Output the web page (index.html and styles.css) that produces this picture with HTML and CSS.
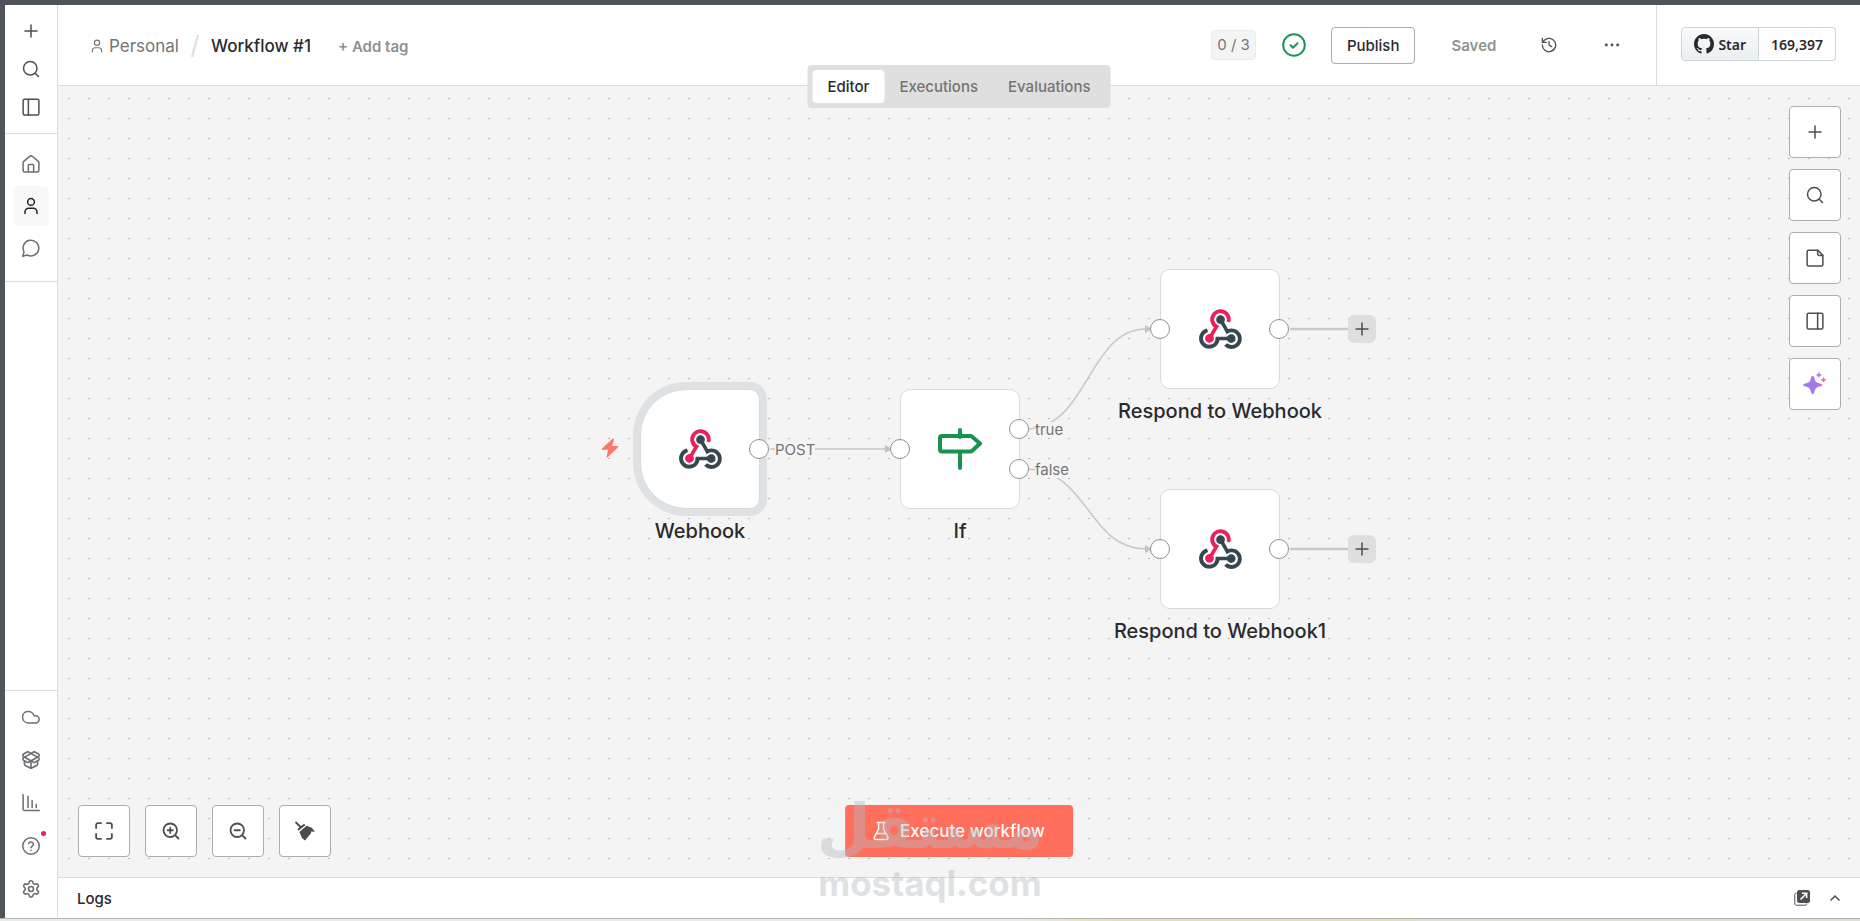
FILE: index.html
```html
<!DOCTYPE html>
<html lang="en">
<head>
<meta charset="utf-8">
<title>Workflow #1</title>
<link rel="stylesheet" href="styles.css">
</head>
<body>
<svg class="defs" aria-hidden="true">
  <symbol id="plus" viewBox="0 0 24 24"><path d="M4 12h16M12 4v16"/></symbol>
  <symbol id="search" viewBox="0 0 24 24"><circle cx="11" cy="11" r="9"/><path d="m22 22-4.3-4.3"/></symbol>
  <symbol id="user" viewBox="0 0 24 24"><path d="M20 22v-2a5 5 0 0 0-5-5H9a5 5 0 0 0-5 5v2"/><circle cx="12" cy="6.500" r="4.500"/></symbol>
  <symbol id="webhook" viewBox="0 0 256 239">
    <path fill="#ec1f5f" d="M119.54 100.503c-10.61 17.836-20.775 35.108-31.152 52.25-2.665 4.401-3.984 7.986-1.855 13.58 5.878 15.454-2.414 30.493-17.998 34.575-14.697 3.851-29.016-5.808-31.932-21.543-2.584-13.927 8.224-27.58 23.58-29.757 1.286-.184 2.6-.205 4.762-.367l23.358-39.168C73.612 95.465 64.868 78.39 66.803 57.23c1.368-14.957 7.25-27.883 18-38.477 20.59-20.288 52.002-23.573 76.246-8.001 23.284 14.958 33.948 44.094 24.858 69.031-6.854-1.858-13.756-3.732-21.343-5.79 2.854-13.865.743-26.315-8.608-36.981-6.178-7.042-14.106-10.733-23.12-12.093-18.072-2.73-35.815 8.88-41.08 26.618-5.976 20.132 3.069 36.575 27.784 48.967z"/>
    <path fill="#37474f" d="M149.841 79.41c7.475 13.187 15.065 26.573 22.587 39.836 38.02-11.763 66.686 9.284 76.97 31.817 12.422 27.219 3.93 59.457-20.465 76.25-25.04 17.238-56.707 14.293-78.892-7.851 5.654-4.733 11.336-9.487 17.407-14.566 21.912 14.192 41.077 13.524 55.305-3.282 12.133-14.337 11.87-35.714-.615-49.75-14.408-16.197-33.707-16.691-57.035-1.143-9.677-17.168-19.522-34.199-28.893-51.491-3.16-5.828-6.648-9.21-13.77-10.443-11.893-2.062-19.571-12.275-20.032-23.717-.453-11.316 6.214-21.545 16.634-25.53 10.322-3.949 22.435-.762 29.378 8.014 5.674 7.17 7.477 15.24 4.491 24.083-.83 2.466-1.905 4.852-3.07 7.774z"/>
    <path fill="#37474f" d="M167.707 187.21h-45.77c-4.387 18.044-13.863 32.612-30.19 41.876-12.693 7.2-26.373 9.641-40.933 7.29-26.808-4.323-48.728-28.456-50.658-55.63-2.184-30.784 18.975-58.147 47.178-64.293 1.947 7.071 3.915 14.21 5.862 21.264-25.876 13.202-34.832 29.836-27.59 50.636 6.375 18.304 24.484 28.337 44.147 24.457 20.08-3.962 30.204-20.65 28.968-47.432 19.036 0 38.088-.197 57.126.097 7.434.117 13.173-.654 18.773-7.208 9.22-10.784 26.191-9.811 36.121.374 10.148 10.409 9.662 27.157-1.077 37.127-10.361 9.62-26.73 9.106-36.424-1.26-1.992-2.136-3.562-4.673-5.533-7.298z"/>
  </symbol>
</svg>

<div class="app">
  <nav class="sidebar" aria-label="Main">
    <div class="side-top">
      <button class="side-btn" aria-label="Create"><svg class="icon"><use href="#plus"/></svg></button>
      <button class="side-btn" aria-label="Search"><svg class="icon"><use href="#search"/></svg></button>
      <button class="side-btn" aria-label="Toggle sidebar"><svg class="icon" viewBox="0 0 24 24"><rect x="1.500" y="1.500" width="21" height="21" rx="2"/><path d="M8.500 1.500v21"/></svg></button>
    </div>
    <div class="side-main">
      <a href="#" class="side-link" aria-label="Overview"><svg class="icon" viewBox="0 0 24 24"><path d="M15.500 22v-8.500a1 1 0 0 0-1-1h-5a1 1 0 0 0-1 1V22"/><path d="M1.500 10a2 2 0 0 1 .8-1.600l8.400-7a2 2 0 0 1 2.600 0l8.400 7a2 2 0 0 1 .8 1.600v10.500a2 2 0 0 1-2 2h-17a2 2 0 0 1-2-2z"/></svg></a>
      <a href="#" class="side-link active" aria-label="Personal"><svg class="icon"><use href="#user"/></svg></a>
      <a href="#" class="side-link" aria-label="Chat"><svg class="icon" viewBox="0 0 24 24"><path d="M6.800 21.300A10.500 10.500 0 1 0 2.700 17.200L1 23z"/></svg></a>
    </div>
    <div class="side-bottom">
      <a href="#" class="side-link" aria-label="Cloud"><svg class="icon" viewBox="0 0 24 24"><path d="M18 20H8.500a7.700 7.700 0 1 1 7.400-9.800H18a4.900 4.900 0 1 1 0 9.800z"/></svg></a>
      <a href="#" class="side-link" aria-label="Templates"><svg class="icon" viewBox="1 1 22 22"><path d="M12 22v-9"/><path d="M15.170 2.210a1.670 1.670 0 0 1 1.630 0L21 4.570a1.930 1.930 0 0 1 0 3.360L8.820 14.790a1.655 1.655 0 0 1-1.640 0L3 12.430a1.930 1.930 0 0 1 0-3.360z"/><path d="M20 13v3.870a2.060 2.060 0 0 1-1.110 1.830l-6 3.080a1.930 1.930 0 0 1-1.780 0l-6-3.080A2.060 2.060 0 0 1 4 16.870V13"/><path d="M21 12.430a1.930 1.930 0 0 0 0-3.360L8.830 2.200a1.640 1.640 0 0 0-1.630 0L3 4.570a1.930 1.930 0 0 0 0 3.360l12.180 6.860a1.636 1.636 0 0 0 1.630 0z"/></svg></a>
      <a href="#" class="side-link" aria-label="Insights"><svg class="icon" viewBox="0 0 24 24"><path d="M1.500 1v19a2 2 0 0 0 2 2H23M8 18V3M13.500 18V8.500M19 18v-4"/></svg></a>
      <a href="#" class="side-link" aria-label="Help"><svg class="icon" viewBox="0 0 24 24"><circle cx="12" cy="12" r="11"/><path d="M8.800 8.700a3.300 3.300 0 0 1 6.400 1.100c0 2.200-3.200 3-3.200 4.400M12 17.800v.1"/></svg><span class="notice"></span></a>
      <a href="#" class="side-link" aria-label="Settings"><svg class="icon" viewBox="1 1 22 22"><path d="M9.700 4.100a2.340 2.340 0 0 1 4.660 0 2.340 2.340 0 0 0 3.320 1.920 2.340 2.340 0 0 1 2.330 4.030 2.340 2.340 0 0 0 0 3.830 2.340 2.340 0 0 1-2.330 4.030 2.340 2.340 0 0 0-3.320 1.920 2.340 2.340 0 0 1-4.660 0 2.340 2.340 0 0 0-3.320-1.920 2.340 2.340 0 0 1-2.330-4.030 2.340 2.340 0 0 0 0-3.830A2.340 2.340 0 0 1 6.400 6.050a2.340 2.340 0 0 0 3.300-1.950"/><circle cx="12" cy="12" r="3"/></svg></a>
    </div>
  </nav>

  <div class="workspace">
    <header class="header">
      <div class="crumbs">
        <a href="#" class="project"><svg class="icon small"><use href="#user"/></svg>Personal</a>
        <svg class="slash" viewBox="0 0 8 22"><path d="M7 0 1 22"/></svg>
        <h1 class="title">Workflow #1</h1>
        <button class="add-tag">+ Add tag</button>
      </div>
      <div class="actions">
        <span class="count">0 / 3</span>
        <svg class="status" viewBox="0 0 24 24"><circle cx="12" cy="12" r="10.800"/><path d="m8.500 12.200 2.500 2.500 4.500-4.500"/></svg>
        <button class="publish">Publish</button>
        <span class="saved">Saved</span>
        <button class="bare" aria-label="History"><svg class="icon mid" viewBox="0 0 24 24"><path d="M2 12A10 10 0 1 0 5 4.900L2 8M2 2v6h6M12 6.500V12l4 2.500"/></svg></button>
        <button class="bare" aria-label="More"><svg class="icon mid dots" viewBox="0 0 24 24"><circle cx="3.500" cy="12" r="2.200"/><circle cx="12" cy="12" r="2.200"/><circle cx="20.500" cy="12" r="2.200"/></svg></button>
      </div>
      <div class="github">
        <a href="#" class="star"><svg class="octocat" viewBox="0 0 16 16"><path d="M8 0C3.580 0 0 3.580 0 8c0 3.540 2.290 6.530 5.470 7.590.4.070.55-.17.550-.38 0-.19-.01-.82-.01-1.490-2.010.37-2.530-.49-2.690-.94-.09-.23-.48-.94-.82-1.130-.28-.15-.68-.52-.01-.53.630-.01 1.080.58 1.230.82.720 1.210 1.870.87 2.330.66.070-.52.280-.87.510-1.070-1.780-.2-3.640-.89-3.640-3.950 0-.87.310-1.590.82-2.150-.08-.2-.36-1.020.08-2.120 0 0 .67-.21 2.200.82.640-.18 1.320-.27 2-.27s1.360.09 2 .27c1.530-1.040 2.200-.82 2.200-.82.440 1.100.160 1.920.08 2.120.510.560.820 1.270.820 2.150 0 3.070-1.870 3.750-3.650 3.950.290.250.540.730.540 1.480 0 1.070-.01 1.930-.01 2.200 0 .210.150.460.550.380A8.010 8.010 0 0 0 16 8c0-4.420-3.580-8-8-8z"/></svg>Star</a>
        <a href="#" class="stars">169,397</a>
      </div>
      <div class="tabs" role="tablist">
        <button class="tab selected" role="tab" aria-selected="true">Editor</button>
        <button class="tab" role="tab">Executions</button>
        <button class="tab" role="tab">Evaluations</button>
      </div>
    </header>

    <main class="canvas">
      <svg class="layer" aria-hidden="true">
        <defs><pattern id="grid" width="20" height="20" patternUnits="userSpaceOnUse"><rect x="10" y="12" width="2" height="1" fill="#b8b8b8"/></pattern></defs>
        <rect width="100%" height="100%" fill="url(#grid)"/>
        <g class="edges">
          <path d="M712 363H828"/>
          <path d="M968 343C1030 343 1030 243 1088 243"/>
          <path d="M968 383C1030 383 1030 463 1088 463"/>
          <path class="thick" d="M1232 243h58M1232 463h58"/>
        </g>
        <g class="arrows"><path d="m827 359 7 4-7 4z"/><path d="m1087 239 7 4-7 4z"/><path d="m1087 459 7 4-7 4z"/></g>
      </svg>

      <span class="edge-label at-post">POST</span>
      <span class="edge-label at-true">true</span>
      <span class="edge-label at-false">false</span>

      <div class="node trigger at-webhook">
        <svg class="hook"><use href="#webhook"/></svg>
        <span class="port right"></span>
        <span class="name">Webhook</span>
      </div>
      <svg class="bolt" viewBox="0 0 18 20"><path d="M11.500.8 1 10.500c-.6.600-.3 1.300.5 1.300h5.700l-1.600 6.600c-.2 1 .6 1.300 1.300.7L17 9.200c.6-.6.3-1.300-.5-1.300h-5.300l1.700-6.300c.2-1-.7-1.400-1.400-.8z"/></svg>
      <div class="node at-if">
        <svg class="sign" viewBox="0 0 44 42"><path d="M22 2v7M22 25v15"/><path d="M4 8h28.500c.6 0 1 .2 1.400.6L42 15.500l-8.100 7.400c-.4.400-.8.600-1.400.6H4a2 2 0 0 1-2-2V10a2 2 0 0 1 2-2z"/></svg>
        <span class="port left"></span>
        <span class="port right upper"></span>
        <span class="port right lower"></span>
        <span class="name">If</span>
      </div>
      <div class="node at-respond">
        <svg class="hook"><use href="#webhook"/></svg>
        <span class="port left"></span><span class="port right"></span>
        <button class="append" aria-label="Add node"><svg class="icon"><use href="#plus"/></svg></button>
        <span class="name">Respond to Webhook</span>
      </div>
      <div class="node at-respond1">
        <svg class="hook"><use href="#webhook"/></svg>
        <span class="port left"></span><span class="port right"></span>
        <button class="append" aria-label="Add node"><svg class="icon"><use href="#plus"/></svg></button>
        <span class="name">Respond to Webhook1</span>
      </div>

      <div class="tools">
        <button class="square" aria-label="Add node"><svg class="icon"><use href="#plus"/></svg></button>
        <button class="square" aria-label="Search"><svg class="icon"><use href="#search"/></svg></button>
        <button class="square" aria-label="Add note"><svg class="icon" viewBox="0 0 24 24"><path d="M15.500 1.500H3.500a2 2 0 0 0-2 2v17a2 2 0 0 0 2 2h17a2 2 0 0 0 2-2v-12z"/><path d="M15.500 1.500v5a2 2 0 0 0 2 2h5"/></svg></button>
        <button class="square" aria-label="Toggle panel"><svg class="icon" viewBox="0 0 24 24"><rect x="1.500" y="1.500" width="21" height="21" rx="2"/><path d="M15.500 1.500v21"/></svg></button>
        <button class="square" aria-label="Assistant"><svg class="spark" viewBox="0 0 24 24"><defs><linearGradient id="sg"><stop offset=".7" stop-color="#a37be6"/><stop offset="1" stop-color="#ff5f8c"/></linearGradient></defs><path fill="url(#sg)" d="M9.700 3.800c1 0 1.300.8 1.600 2 1 4 1.700 4.700 5.600 5.700 1.500.4 2.300.7 2.300 1.500s-.8 1.100-2.300 1.500c-3.900 1-4.600 1.700-5.600 5.700-.3 1.200-.6 2-1.600 2s-1.300-.8-1.600-2c-1-4-1.700-4.700-5.600-5.700C1 14.100.2 13.800.2 13s.8-1.100 2.300-1.500c3.900-1 4.600-1.700 5.600-5.700.3-1.200.6-2 1.600-2z"/><path d="M15.900.5v5M13.400 3h5" stroke="#a37be6"/><path d="M20.500 5.500v4.600M18.200 7.800h4.600" stroke="#ff5f8c"/></svg></button>
      </div>
      <div class="zoom">
        <button class="square" aria-label="Fit view"><svg class="icon bold" viewBox="0 0 24 24"><path d="M8 1.500H4A2.500 2.500 0 0 0 1.500 4v4M16 1.500h4A2.500 2.500 0 0 1 22.500 4v4M22.500 16v4a2.500 2.500 0 0 1-2.500 2.500h-4M8 22.500H4A2.500 2.500 0 0 1 1.500 20v-4"/></svg></button>
        <button class="square" aria-label="Zoom in"><svg class="icon bold" viewBox="0 0 24 24"><circle cx="11" cy="11" r="9"/><path d="m22 22-4.300-4.300M11 7.500v7M7.500 11h7"/></svg></button>
        <button class="square" aria-label="Zoom out"><svg class="icon bold" viewBox="0 0 24 24"><circle cx="11" cy="11" r="9"/><path d="m22 22-4.300-4.300M7.500 11h7"/></svg></button>
        <button class="square" aria-label="Tidy up"><svg class="broom" viewBox="0 0 20 20"><path d="M1.600.4 6 4.600l3.200-2.200 1.200 1.400-7 5.600-1-1.300 2-2.300L.4 1.800C-.3.900.8-.3 1.600.4z" transform="translate(0 .4)"/><path d="m11.600 4.800 5.200 2 3.200 4-4.200-.3.400 1.400-6.200 7.600-3-2.600-2.600-6z"/></svg></button>
      </div>
      <button class="execute"><svg class="flask" viewBox="0 0 16 20"><path d="M4 1.500h8M5.500 1.500v6.600L1.300 16.200c-.6 1.200 0 2.300 1.300 2.300h10.800c1.300 0 1.900-1.100 1.300-2.300L10.500 8.100V1.500M3.500 12.500h9"/></svg>Execute workflow</button>
    </main>

    <footer class="logs">
      <span>Logs</span>
      <div class="logs-actions">
        <button class="bare" aria-label="Pop out"><svg class="popout" viewBox="0 0 16 16"><path d="M2.500 3.200C1 3.200.8 4 .8 5v8.500c0 1.200.6 1.700 1.700 1.700H11c1.200 0 1.800-.4 1.800-1.700" fill="none" stroke="#4b4f54"/><rect x="3" y="0" width="13" height="13" rx="2.500" fill="#4b4f54"/><path d="m6.500 9.500 6-6M8 3.300h4.700V8" fill="none" stroke="#fff" stroke-width="1.500"/></svg></button>
        <button class="bare" aria-label="Expand"><svg class="chevron" viewBox="0 0 12 8"><path d="m1.500 6.500 4.500-4.500 4.500 4.500"/></svg></button>
      </div>
    </footer>
  </div>
</div>
<div class="watermark"><span class="mark-ar" lang="ar" dir="rtl">مستقل</span><span class="mark-en">mostaql.com</span></div>
</body>
</html>
```
FILE: styles.css
```css
* { box-sizing: border-box; }
body {
  position: relative;
  margin: 0;
  height: 100vh;
  padding: 5px 0 3px 5px;
  background: #4f545a;
  font-family: Inter, "Noto Sans", sans-serif;
  font-size: 15px;
  color: #2a2a2e;
  overflow: hidden;
}
button { font: inherit; color: inherit; margin: 0; padding: 0; border: 0; background: none; cursor: pointer; }
a { color: inherit; text-decoration: none; }
.defs { position: absolute; width: 0; height: 0; }
.icon {
  display: block;
  width: 18px;
  height: 18px;
  fill: none;
  stroke: currentColor;
  stroke-width: 2;
  stroke-linecap: round;
  stroke-linejoin: round;
}
.icon.bold { stroke-width: 2.4; }
.icon.mid { width: 16px; height: 16px; }
.icon.small { width: 14px; height: 14px; }
.icon.dots { fill: currentColor; stroke: none; }

.app { position: relative; display: flex; height: 100%; background: #fff; }
.app::after {
  content: "";
  position: absolute;
  top: 100%;
  left: -5px;
  right: 0;
  height: 3px;
  border-top: 1px solid #b3b6b3;
  background: linear-gradient(90deg, #e9ebe9 55%, #e3dfae 60%, #e3dfae 74%, #dcded6 77%);
}

/* sidebar */
.sidebar { display: flex; flex-direction: column; width: 53px; border-right: 1px solid #dcdcdc; color: #6c6e73; }
.side-top, .side-main, .side-bottom { display: flex; flex-direction: column; align-items: center; }
.side-top { padding: 7px 0; border-bottom: 1px solid #dcdcdc; color: #4b4f54; }
.side-main { gap: 2px; padding: 10px 0 13px; border-bottom: 1px solid #dcdcdc; }
.side-bottom { gap: 3px; margin-top: auto; padding: 6px 0 9px; border-top: 1px solid #dcdcdc; }
.side-btn, .side-link { position: relative; display: flex; align-items: center; justify-content: center; width: 36px; height: 38px; }
.side-link { height: 40px; border-radius: 5px; }
.side-link.active { background: #f8f8f8; color: #222; }
.notice { position: absolute; top: 5px; right: 3px; width: 5px; height: 5px; border-radius: 50%; background: #ee1f58; }

/* header */
.workspace { display: flex; flex: 1; flex-direction: column; min-width: 0; }
.header { position: relative; z-index: 2; display: flex; height: 81px; border-bottom: 1px solid #dcdcdc; }
.crumbs { display: flex; flex: 1; align-items: center; padding: 2px 0 0 32px; font-size: 17px; }
.project { display: flex; align-items: center; gap: 5px; color: #747474; }
.slash { width: 8px; height: 22px; margin: 0 12px; fill: none; stroke: #dcdcdc; stroke-width: 2; }
.title { margin: 0; font-size: 17px; font-weight: 500; }
.add-tag { margin-left: 27px; color: #8f9090; font-size: 15px; font-weight: 600; }
.actions { display: flex; align-items: center; padding-right: 36px; }
.count { padding: 5px; border: 1px solid #ececec; border-radius: 4px; background: #f4f4f4; color: #747474; line-height: 18px; }
.status { width: 24px; height: 24px; margin: 0 25px 0 26px; fill: none; stroke: #1d9555; stroke-width: 2; stroke-linecap: round; stroke-linejoin: round; }
.publish { height: 37px; padding: 0 15px; border: 1px solid #adadad; border-radius: 4px; font-weight: 500; }
.saved { margin: 0 45px 0 36px; color: #8f9490; font-weight: 600; }
.bare { display: flex; color: #4b4f54; }
.actions .bare + .bare { margin-left: 47px; }
.github { display: flex; align-items: center; padding: 0 24px 2px; border-left: 1px solid #dcdcdc; font-family: "Noto Sans", sans-serif; font-size: 14px; font-weight: 600; }
.star, .stars { display: flex; align-items: center; height: 34px; padding: 0 12px; border: 1px solid #ccd6dd; }
.star { gap: 4px; border-radius: 4px 0 0 4px; background: linear-gradient(#f8fafb, #eaeff2); }
.stars { border-left: 0; border-radius: 0 4px 4px 0; }
.octocat { width: 20px; height: 20px; fill: #25292e; }
.tabs { position: absolute; top: 60px; left: 50%; display: flex; height: 43px; padding: 5px; transform: translateX(-50%); border-radius: 4px; background: #dfdfdf; }
.tab { padding: 0 15px; border-radius: 4px; color: #747474; font-weight: 500; }
.tab.selected { background: #fff; color: #2a2a2e; }

/* canvas */
.canvas { position: relative; flex: 1; min-height: 0; overflow: hidden; background: #f4f4f4; }
.layer { position: absolute; width: 100%; height: 100%; }
.edges { fill: none; stroke: #c9c9c9; stroke-width: 1.5; }
.thick { stroke-width: 2.5; }
.arrows { fill: #c4c4c4; }
.edge-label { position: absolute; background: #f4f4f4; color: #747474; font-size: 15px; line-height: 16px; }
.at-post { left: 717px; top: 356px; }
.at-true { left: 977px; top: 336px; }
.at-false { left: 977px; top: 376px; }
.node { position: absolute; display: flex; align-items: center; justify-content: center; width: 120px; height: 120px; border: 1px solid #dadada; border-radius: 10px; background: #fff; }
.trigger { border-radius: 46px 10px 10px 46px; box-shadow: 0 0 0 7px #dfe2e5; }
.at-webhook { left: 582px; top: 303px; }
.at-if { left: 842px; top: 303px; }
.at-respond { left: 1102px; top: 183px; }
.at-respond1 { left: 1102px; top: 403px; }
.name { position: absolute; top: 129px; left: 50%; transform: translateX(-50%); white-space: nowrap; font-size: 20px; font-weight: 500; line-height: 24px; }
.hook { width: 43px; height: 40px; }
.sign { width: 44px; height: 42px; fill: none; stroke: #17934f; stroke-width: 4; stroke-linecap: round; stroke-linejoin: round; }
.port { position: absolute; top: 49px; width: 20px; height: 20px; border: 1px solid #8f8f8f; border-radius: 50%; background: #fff; }
.port.left { left: -11px; }
.port.right { right: -10px; }
.port.upper { top: 29px; }
.port.lower { top: 69px; }
.append { position: absolute; top: 45px; left: 187px; display: flex; align-items: center; justify-content: center; width: 28px; height: 28px; border-radius: 6px; background: #dfdfdf; color: #4b4f54; }
.bolt { position: absolute; left: 543px; top: 352px; width: 18px; height: 20px; fill: #ff7866; }

.tools, .zoom { position: absolute; display: flex; }
.tools { top: 20px; right: 19px; flex-direction: column; gap: 11px; }
.zoom { left: 20px; bottom: 20px; gap: 15px; }
.square { display: flex; align-items: center; justify-content: center; width: 52px; height: 52px; border: 1px solid #adadad; border-radius: 4px; background: #fff; color: #4b4f54; }
.spark { width: 24px; height: 24px; fill: none; stroke-width: 1.5; }
.broom { width: 20px; height: 20px; fill: #474d52; }
.execute { position: absolute; left: 50%; bottom: 20px; display: flex; align-items: center; gap: 11px; height: 52px; padding: 0 28px; transform: translateX(-50%); border-radius: 4px; background: #ff6f5c; color: #fff; font-size: 17px; font-weight: 500; white-space: nowrap; }
.flask { width: 16px; height: 20px; fill: none; stroke: #fff; stroke-width: 1.5; stroke-linejoin: round; stroke-linecap: round; }

/* logs */
.logs { display: flex; align-items: center; justify-content: space-between; height: 41px; padding: 0 19px; border-top: 1px solid #dcdcdc; font-weight: 500; }
.logs-actions { display: flex; align-items: center; gap: 19px; }
.popout { width: 16px; height: 16px; }
.chevron { width: 12px; height: 8px; fill: none; stroke: #4b4f54; stroke-width: 1.5; }

.watermark { position: absolute; z-index: 3; left: 50%; bottom: 16px; display: flex; flex-direction: column; align-items: center; transform: translateX(-50%); color: #b4bcc2; opacity: .42; font-weight: 700; pointer-events: none; }
.mark-ar { font-family: "DejaVu Sans", sans-serif; font-size: 62px; line-height: 68px; }
.mark-en { font-family: Inter, sans-serif; font-size: 35px; line-height: 44px; }
```
